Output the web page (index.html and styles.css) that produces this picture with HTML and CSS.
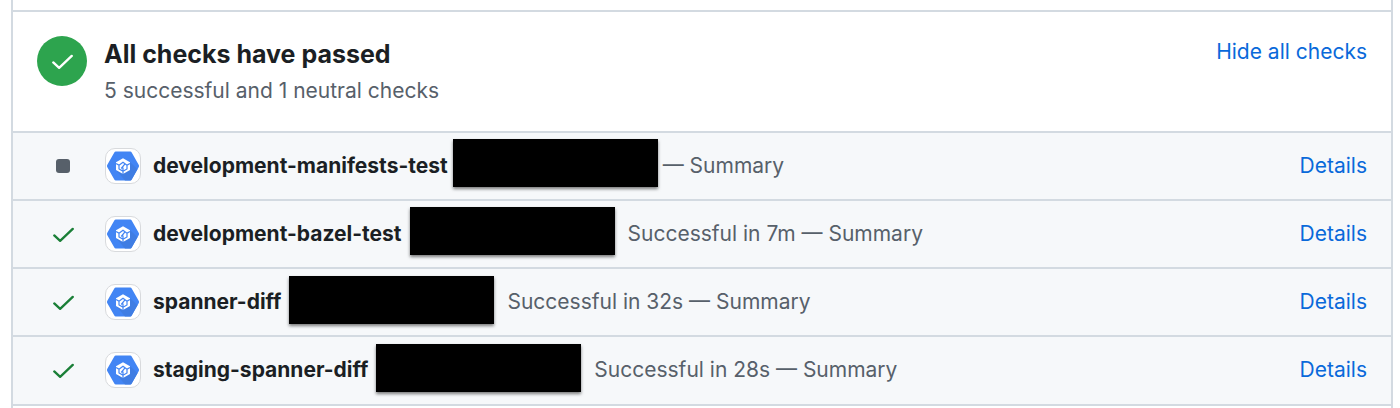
FILE: index.html
```
<!DOCTYPE html>
<html lang="en">
<head>
<meta charset="utf-8">
<title>Checks</title>
<link rel="stylesheet" href="styles.css">
</head>
<body>
<svg class="defs" aria-hidden="true">
  <symbol id="check" viewBox="0 0 20 14"><path d="M1.2 7.4 6.8 12.6 18.8 1.2" fill="none" stroke="currentColor" stroke-width="2.2" stroke-linecap="round" stroke-linejoin="round"/></symbol>
  <symbol id="build" viewBox="0 0 34 34">
    <path d="M9.800 2.500H24.200Q25.200 2.500 25.700 3.400L32.800 16.100Q33.300 17 32.800 17.900L25.700 30.600Q25.200 31.500 24.200 31.500H9.800Q8.800 31.500 8.300 30.600L1.200 17.900Q.7 17 1.200 16.100L8.300 3.400Q8.800 2.500 9.800 2.500Z" fill="#4285f4"/>
    <path d="M24 13 31.500 20.300 25.700 30.600Q25.200 31.500 24.200 31.500H19L11 22Z" fill="#3f7de3"/>
    <path d="M17 9.300 24 13.200V21L17 25 10 21V13.200Z" fill="#fff"/>
    <path d="M10 14.500 13 16.200V20L17 22.200V25M24 14.500 21 16.200V20L17 22.200M13 16.200 17 13.200 21 16.200M15.200 19.500 19 14.800M17 18.500V22" fill="none" stroke="#4285f4" stroke-width="1.200"/>
  </symbol>
</svg>
<main class="panel">
  <header class="summary">
    <span class="badge"><svg class="check"><use href="#check"/></svg></span>
    <div class="heading">
      <h1>All checks have passed</h1>
      <p>5 successful and 1 neutral checks</p>
    </div>
    <button class="toggle" type="button">Hide all checks</button>
  </header>
  <ul class="checks">
    <li class="row">
      <span class="status"><span class="neutral"></span></span>
      <span class="avatar"><svg><use href="#build"/></svg></span>
      <strong>development-manifests-test</strong>
      <span class="redacted tight"></span>
      <span class="result">— Summary</span>
      <a href="#details-1">Details</a>
    </li>
    <li class="row">
      <span class="status"><svg class="check"><use href="#check"/></svg></span>
      <span class="avatar"><svg><use href="#build"/></svg></span>
      <strong>development-bazel-test</strong>
      <span class="redacted"></span>
      <span class="result">Successful in 7m — Summary</span>
      <a href="#details-2">Details</a>
    </li>
    <li class="row">
      <span class="status"><svg class="check"><use href="#check"/></svg></span>
      <span class="avatar"><svg><use href="#build"/></svg></span>
      <strong>spanner-diff</strong>
      <span class="redacted low"></span>
      <span class="result">Successful in 32s — Summary</span>
      <a href="#details-3">Details</a>
    </li>
    <li class="row">
      <span class="status"><svg class="check"><use href="#check"/></svg></span>
      <span class="avatar"><svg><use href="#build"/></svg></span>
      <strong>staging-spanner-diff</strong>
      <span class="redacted low"></span>
      <span class="result">Successful in 28s — Summary</span>
      <a href="#details-4">Details</a>
    </li>
  </ul>
</main>
</body>
</html>
```
FILE: styles.css
```
* { box-sizing: border-box; }
body {
  margin: 0;
  background: #fff;
  color: #1b1f24;
  font: 21px/32px Inter, "Liberation Sans", sans-serif;
}
.defs { position: absolute; width: 0; height: 0; }
.panel {
  min-height: 100vh;
  margin: 0 7px 0 11px;
  padding-top: 10px;
  border: solid #d3dae1;
  border-width: 0 2px;
}
.summary {
  display: flex;
  align-items: flex-start;
  padding: 24px 24px 24px;
  border-top: 2px solid #d3dae1;
}
.badge {
  display: grid;
  place-items: center;
  width: 50px;
  height: 50px;
  padding-top: 2px;
  border-radius: 50%;
  background: #2da44e;
  color: #fff;
}
.check { display: block; width: 21px; height: 16px; }
.heading { flex: 1; padding-left: 17px; }
h1 { margin: 0; font-size: 25px; line-height: 36px; font-weight: 700; }
p { margin: 3px 0 0; color: #57606a; }
.toggle {
  padding: 0;
  border: 0;
  background: none;
  color: #0969da;
  font: inherit;
  cursor: pointer;
}
.checks {
  margin: 0;
  padding: 0 0 1px;
  list-style: none;
  background: #f6f8fa;
  border-bottom: 2px solid #d3dae1;
}
.row {
  display: flex;
  align-items: center;
  min-height: 68px;
  padding: 0 24px;
  border-top: 2px solid #d3dae1;
}
.status { display: grid; place-items: center; width: 52px; color: #1a7f37; }
.status .check { margin-top: 2px; }
.neutral { width: 14px; height: 14px; border-radius: 3px; background: #57606a; }
.avatar {
  display: grid;
  place-items: center;
  width: 36px;
  height: 36px;
  margin: 0 12px 0 16px;
  border: 1px solid #d8dadd;
  border-radius: 10px;
  background: #fff;
}
.avatar svg { width: 34px; height: 34px; }
strong { font-weight: 700; }
.redacted {
  width: 205px;
  height: 48px;
  margin: 0 13px 6px 8px;
  background: #000;
  box-shadow: 0 2px 3px rgba(0, 0, 0, .5);
}
.redacted.tight { margin: 0 5px 6px 5px; }
.redacted.low { margin-bottom: 4px; }
.result { flex: 1; color: #57606a; }
a { color: #0969da; text-decoration: none; }
```
